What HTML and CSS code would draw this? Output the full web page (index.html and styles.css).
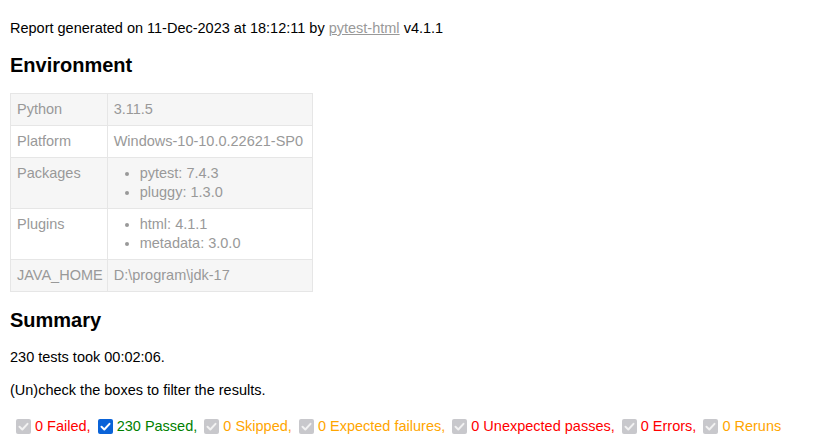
FILE: index.html
```html
<!DOCTYPE html>
<html lang="en">
<head>
<meta charset="utf-8">
<title>report.html</title>
<link rel="stylesheet" href="styles.css">
</head>
<body>
<p class="generated">Report generated on 11-Dec-2023 at 18:12:11 by <a href="#">pytest-html</a> v4.1.1</p>
<h2 class="env-title">Environment</h2>
<table class="environment">
  <tr><td class="key">Python</td><td class="val">3.11.5</td></tr>
  <tr><td class="key">Platform</td><td class="val">Windows-10-10.0.22621-SP0</td></tr>
  <tr><td class="key">Packages</td><td class="val"><ul><li>pytest: 7.4.3</li><li>pluggy: 1.3.0</li></ul></td></tr>
  <tr><td class="key">Plugins</td><td class="val"><ul><li>html: 4.1.1</li><li>metadata: 3.0.0</li></ul></td></tr>
  <tr><td class="key">JAVA_HOME</td><td class="val">D:\program\jdk-17</td></tr>
</table>
<h2 class="summary-title">Summary</h2>
<p class="line">230 tests took 00:02:06.</p>
<p class="line">(Un)check the boxes to filter the results.</p>
<div class="filters">
  <span class="filter first"><span class="cb off"><svg viewBox="0 0 15 15"><polyline points="3.5,7.8 6.3,10.5 11.5,4.8"/></svg></span><span class="failed">0 Failed,</span></span>
  <span class="filter"><span class="cb on"><svg viewBox="0 0 15 15"><polyline points="3.5,7.8 6.3,10.5 11.5,4.8"/></svg></span><span class="passed">230 Passed,</span></span>
  <span class="filter"><span class="cb off"><svg viewBox="0 0 15 15"><polyline points="3.5,7.8 6.3,10.5 11.5,4.8"/></svg></span><span class="skipped">0 Skipped,</span></span>
  <span class="filter"><span class="cb off"><svg viewBox="0 0 15 15"><polyline points="3.5,7.8 6.3,10.5 11.5,4.8"/></svg></span><span class="xfailed">0 Expected failures,</span></span>
  <span class="filter"><span class="cb off"><svg viewBox="0 0 15 15"><polyline points="3.5,7.8 6.3,10.5 11.5,4.8"/></svg></span><span class="xpassed">0 Unexpected passes,</span></span>
  <span class="filter"><span class="cb off"><svg viewBox="0 0 15 15"><polyline points="3.5,7.8 6.3,10.5 11.5,4.8"/></svg></span><span class="error">0 Errors,</span></span>
  <span class="filter"><span class="cb off"><svg viewBox="0 0 15 15"><polyline points="3.5,7.8 6.3,10.5 11.5,4.8"/></svg></span><span class="rerun">0 Reruns</span></span>
</div>
</body>
</html>
```
FILE: styles.css
```css
html, body {
  margin: 0;
  padding: 0;
  background: #fff;
}
body {
  font-family: "Liberation Sans", Arial, Helvetica, sans-serif;
  font-size: 14.5px;
  line-height: 16px;
  color: #999;
  padding: 20px 10px 0 10px;
}
p {
  color: #000;
  margin: 0;
}
a {
  color: #999;
}
h2 {
  font-size: 20px;
  line-height: 23px;
  font-weight: bold;
  color: #000;
  margin: 0;
}
.env-title {
  margin-top: 18px;
}
.environment {
  border-collapse: collapse;
  margin-top: 16px;
}
.environment tr:nth-child(odd) {
  background: #f6f6f6;
}
.environment td {
  border: 1px solid #e6e6e6;
  padding: 7px 6px;
  line-height: 17px;
  vertical-align: top;
  text-align: left;
}
.environment td.key {
  padding-right: 4px;
}
.environment td.val {
  padding-right: 9px;
}
.environment ul {
  margin: 0;
  padding-left: 26px;
}
.environment li + li {
  margin-top: 2px;
}
.summary-title {
  margin-top: 17px;
}
.line {
  margin-top: 17px;
}
.filters {
  margin-top: 20px;
  white-space: nowrap;
}
.filter .cb {
  display: inline-block;
  width: 15px;
  height: 15px;
  border-radius: 2px;
  vertical-align: -3px;
  margin: 0 4px 0 3px;
}
.filter.first .cb {
  margin-left: 6px;
}
.cb svg {
  display: block;
  width: 15px;
  height: 15px;
}
.cb polyline {
  fill: none;
  stroke-width: 2;
  stroke-linecap: round;
  stroke-linejoin: round;
}
.cb.off {
  background: #c8c8cc;
}
.cb.off polyline {
  stroke: #f2f2f2;
}
.cb.on {
  background: #0a63d8;
}
.cb.on polyline {
  stroke: #fff;
}
.failed, .error, .xpassed {
  color: red;
}
.passed {
  color: green;
}
.skipped, .xfailed, .rerun {
  color: orange;
}
```
